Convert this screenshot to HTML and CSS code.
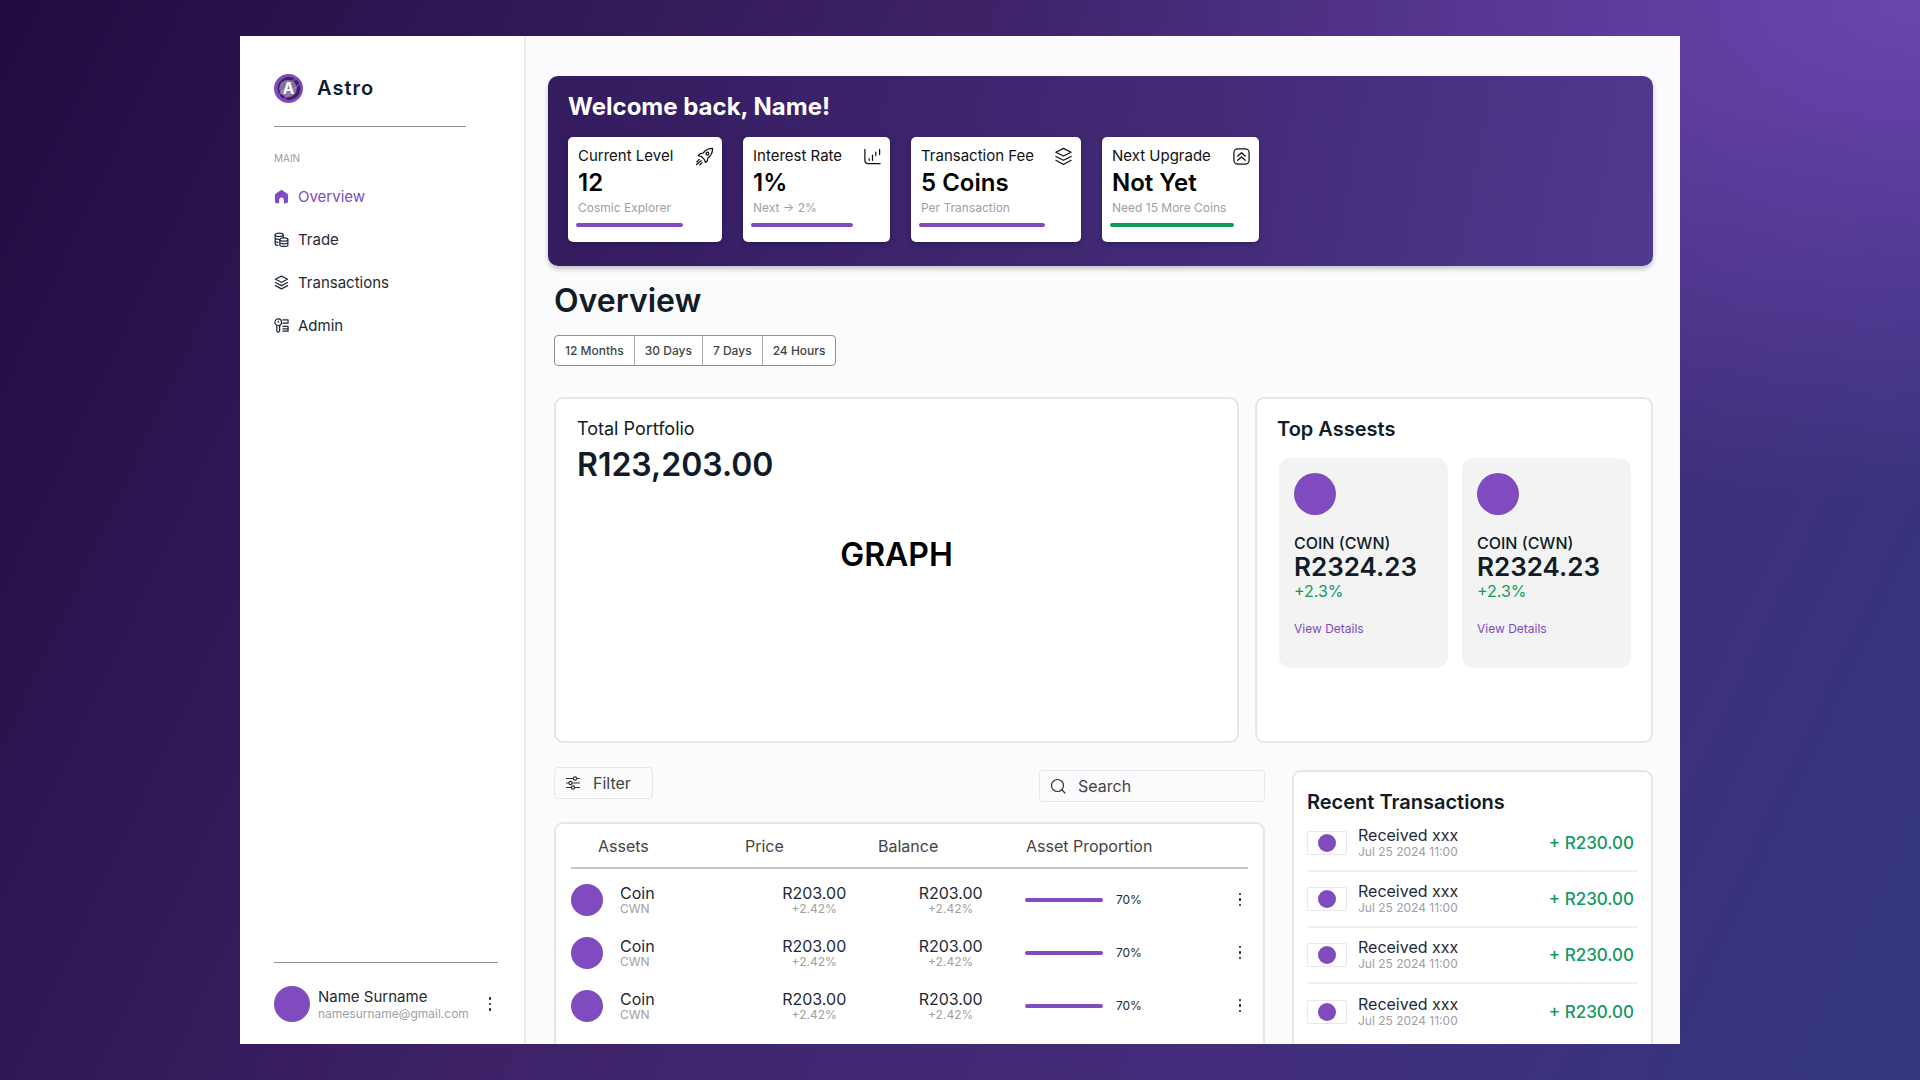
FILE: index.html
```html
<!DOCTYPE html>
<html lang="en">
<head>
<meta charset="utf-8">
<title>Astro</title>
<link rel="stylesheet" href="styles.css">
</head>
<body>
<div class="window">
  <aside class="sidebar">
    <div class="brand">
      <svg class="logo" viewBox="0 0 28 28"><circle cx="14" cy="14" r="14" fill="#7f4bbf"/><circle cx="14.5" cy="14" r="11" fill="#3a2160"/><path d="M5 20 21 4M10 24 26 8" stroke="#7f4bbf" stroke-width="1.5"/><circle cx="13.500" cy="14" r="8.500" fill="#bdb3cc" opacity=".55"/><text x="14" y="19.500" text-anchor="middle" class="logo-letter">A</text></svg>
      <span class="brand-name">Astro</span>
    </div>
    <div class="rule brand-rule"></div>
    <div class="nav-label">MAIN</div>
    <nav class="nav">
      <a class="nav-item active"><svg class="nav-icon" viewBox="0 0 16 16"><path d="M8 .8 2.100 4.700C1.400 5.200 1 5.900 1 6.700V13c0 1.300 1 2.200 2.200 2.200h2.300v-3.600a2.500 2.500 0 0 1 5 0v3.600h2.300c1.200 0 2.200-.9 2.200-2.200V6.700c0-.8-.4-1.500-1.100-2z" fill="#7f4bbf"/></svg>Overview</a>
      <a class="nav-item"><svg class="nav-icon line" viewBox="0 0 16 16"><ellipse cx="5.500" cy="3" rx="4.300" ry="1.800"/><path d="M1.200 3v9.500c0 .9 1.200 1.500 3 1.700M1.200 6.200c0 1 1.500 1.700 4.300 1.700M1.200 9.400c0 .9 1 1.500 3 1.700M9.800 3v3"/><ellipse cx="10.500" cy="8" rx="4.300" ry="1.800"/><path d="M6.200 8v5.800c0 .9 1.900 1.600 4.300 1.600s4.300-.7 4.300-1.600V8M6.200 11c0 .9 1.900 1.600 4.300 1.600s4.300-.7 4.300-1.600"/></svg>Trade</a>
      <a class="nav-item"><svg class="nav-icon line" viewBox="0 0 16 16"><path d="M8 1.200 1.500 4.500 8 7.800l6.500-3.300zM1.500 8 8 11.300 14.500 8M1.500 11.300 8 14.800l6.500-3.500"/></svg>Transactions</a>
      <a class="nav-item"><svg class="nav-icon line" viewBox="0 0 16 16"><circle cx="4.500" cy="4.500" r="3.500"/><path d="M3 8v6l1.500 1.200L6 14V8M4.500 3.500v1M9.500 2H15v3.500H9.500M9.500 5.500H14M9.500 9H15v5H9.500M9.500 11.500H15"/></svg>Admin</a>
    </nav>
    <div class="sidebar-foot">
      <div class="rule"></div>
      <div class="user">
        <span class="dot dot-36"></span>
        <div class="user-text">
          <div class="user-name">Name Surname</div>
          <div class="user-mail">namesurname@gmail.com</div>
        </div>
        <span class="kebab"><i></i><i></i><i></i></span>
      </div>
    </div>
  </aside>

  <main class="main">
    <section class="banner">
      <h2 class="banner-title">Welcome back, Name!</h2>
      <div class="stats">
        <div class="stat s1">
          <div class="stat-head"><span>Current Level</span><svg class="stat-icon" viewBox="0 0 20 20"><path d="M18.500 1.500c-4 0-7.500 1.500-10 5L5.500 7 3.500 9l3.200 1 3.300 3.300 1 3.200 2-2 .5-3c3.500-2.500 5-6 5-10z"/><circle cx="13" cy="7" r="1.500"/><path d="M4.500 13 2 15.500M6.500 14.500 1.500 18.500M7.500 16.500 5 19"/></svg></div>
          <div class="stat-value">12</div>
          <div class="stat-sub">Cosmic Explorer</div>
          <div class="stat-bar w1"></div>
        </div>
        <div class="stat s2">
          <div class="stat-head"><span>Interest Rate</span><svg class="stat-icon" viewBox="0 0 20 20"><path d="M2 2.500v11.500c0 2 1.500 3.500 3.500 3.500H18M6.500 12.500v1.500M10 8.500v5.500M13.500 5.500V9M17.500 2.500v5.500"/></svg></div>
          <div class="stat-value">1%</div>
          <div class="stat-sub">Next → 2%</div>
          <div class="stat-bar w2"></div>
        </div>
        <div class="stat s3">
          <div class="stat-head"><span>Transaction Fee</span><svg class="stat-icon" viewBox="0 0 20 20"><path d="M10 1.500 2 5.500l8 4 8-4zM2 10l8 4 8-4M2 14l8 4.500 8-4.500"/></svg></div>
          <div class="stat-value">5 Coins</div>
          <div class="stat-sub">Per Transaction</div>
          <div class="stat-bar w3"></div>
        </div>
        <div class="stat s4">
          <div class="stat-head"><span>Next Upgrade</span><svg class="stat-icon" viewBox="0 0 20 20"><rect x="2" y="2" width="16" height="16" rx="4"/><path d="M6 9.500l4-3.500 4 3.500M6 14l4-3.500 4 3.500"/></svg></div>
          <div class="stat-value">Not Yet</div>
          <div class="stat-sub">Need 15 More Coins</div>
          <div class="stat-bar w4 green"></div>
        </div>
      </div>
    </section>

    <h1 class="page-title">Overview</h1>
    <div class="segments">
      <span class="segment">12 Months</span><span class="segment">30 Days</span><span class="segment">7 Days</span><span class="segment">24 Hours</span>
    </div>

    <div class="top-row">
      <section class="panel portfolio">
        <div class="portfolio-label">Total Portfolio</div>
        <div class="portfolio-value">R123,203.00</div>
        <div class="graph">GRAPH</div>
      </section>
      <section class="panel top-assets">
        <h3 class="panel-title">Top Assests</h3>
        <div class="asset-cards">
          <div class="asset-card">
            <span class="dot dot-42"></span>
            <div class="asset-name">COIN (CWN)</div>
            <div class="asset-price">R2324.23</div>
            <div class="asset-change">+2.3%</div>
            <a class="asset-link">View Details</a>
          </div>
          <div class="asset-card">
            <span class="dot dot-42"></span>
            <div class="asset-name">COIN (CWN)</div>
            <div class="asset-price">R2324.23</div>
            <div class="asset-change">+2.3%</div>
            <a class="asset-link">View Details</a>
          </div>
        </div>
      </section>
    </div>

    <div class="bottom-row">
      <div class="table-col">
        <div class="toolbar">
          <div class="filter"><svg class="tool-icon" viewBox="0 0 16 16"><path d="M1.500 3.500h13M1.500 8h13M1.500 12.500h13"/><circle cx="10" cy="3.500" r="1.600" fill="#fff"/><circle cx="5.500" cy="8" r="1.600" fill="#fff"/><circle cx="8" cy="12.500" r="1.600" fill="#fff"/></svg>Filter</div>
          <div class="search"><svg class="tool-icon" viewBox="0 0 16 16"><circle cx="7.500" cy="7.500" r="6"/><path d="m12 12 3 3"/></svg>Search</div>
        </div>
        <section class="panel table">
          <div class="t-head">
            <span class="th-assets">Assets</span><span class="th-price">Price</span><span class="th-balance">Balance</span><span class="th-prop">Asset Proportion</span>
          </div>
          <div class="t-row">
            <span class="dot dot-32"></span>
            <div class="t-coin"><div class="t-main">Coin</div><div class="t-sub">CWN</div></div>
            <div class="t-num"><div class="t-main">R203.00</div><div class="t-sub">+2.42%</div></div>
            <div class="t-num"><div class="t-main">R203.00</div><div class="t-sub">+2.42%</div></div>
            <div class="t-prop"><span class="t-bar"></span><span class="t-pct">70%</span></div>
            <span class="kebab"><i></i><i></i><i></i></span>
          </div>
          <div class="t-row">
            <span class="dot dot-32"></span>
            <div class="t-coin"><div class="t-main">Coin</div><div class="t-sub">CWN</div></div>
            <div class="t-num"><div class="t-main">R203.00</div><div class="t-sub">+2.42%</div></div>
            <div class="t-num"><div class="t-main">R203.00</div><div class="t-sub">+2.42%</div></div>
            <div class="t-prop"><span class="t-bar"></span><span class="t-pct">70%</span></div>
            <span class="kebab"><i></i><i></i><i></i></span>
          </div>
          <div class="t-row">
            <span class="dot dot-32"></span>
            <div class="t-coin"><div class="t-main">Coin</div><div class="t-sub">CWN</div></div>
            <div class="t-num"><div class="t-main">R203.00</div><div class="t-sub">+2.42%</div></div>
            <div class="t-num"><div class="t-main">R203.00</div><div class="t-sub">+2.42%</div></div>
            <div class="t-prop"><span class="t-bar"></span><span class="t-pct">70%</span></div>
            <span class="kebab"><i></i><i></i><i></i></span>
          </div>
        </section>
      </div>
      <section class="panel recent">
        <h3 class="panel-title">Recent Transactions</h3>
        <div class="tx"><span class="tx-thumb"><span class="dot dot-18"></span></span><div class="tx-text"><div class="tx-name">Received xxx</div><div class="tx-date">Jul 25 2024 11:00</div></div><div class="tx-amount">+ R230.00</div></div>
        <div class="tx"><span class="tx-thumb"><span class="dot dot-18"></span></span><div class="tx-text"><div class="tx-name">Received xxx</div><div class="tx-date">Jul 25 2024 11:00</div></div><div class="tx-amount">+ R230.00</div></div>
        <div class="tx"><span class="tx-thumb"><span class="dot dot-18"></span></span><div class="tx-text"><div class="tx-name">Received xxx</div><div class="tx-date">Jul 25 2024 11:00</div></div><div class="tx-amount">+ R230.00</div></div>
        <div class="tx"><span class="tx-thumb"><span class="dot dot-18"></span></span><div class="tx-text"><div class="tx-name">Received xxx</div><div class="tx-date">Jul 25 2024 11:00</div></div><div class="tx-amount">+ R230.00</div></div>
      </section>
    </div>
  </main>
</div>
</body>
</html>
```
FILE: styles.css
```css
* { box-sizing: border-box; }
html, body { height: 100%; }
body {
  margin: 0;
  overflow: hidden;
  font-family: Inter, "Liberation Sans", sans-serif;
  color: #101c28;
  padding-top: 36px;
  background:
    radial-gradient(900px 500px at 100% 0%, #6a45ae 0%, rgba(106,69,174,0) 100%),
    linear-gradient(165deg, #1f0b3c 0%, transparent 0%),
    linear-gradient(115deg, #200c40 0%, #3d2268 40%, #432c7a 70%, #33377f 100%);
}
.window { width: 1440px; height: 1008px; margin: 0 auto; display: flex; overflow: hidden; background: #fbfbfe; }

/* sidebar */
.sidebar { width: 285px; flex: none; background: #fff; border-right: 1px solid #e4e4e7; padding: 38px 26px 22px 34px; display: flex; flex-direction: column; box-shadow: 1px 0 2px rgba(0,0,0,.06); }
.brand { display: flex; align-items: center; gap: 14px; height: 28px; }
.logo { width: 29px; height: 29px; flex: none; }
.logo-letter { font: 700 15px Inter, sans-serif; fill: #fff; }
.brand-name { font-size: 20px; font-weight: 600; letter-spacing: 1px; color: #101c28; }
.rule { height: 1px; background: #8f8f94; }
.brand-rule { width: 192px; margin-top: 24px; }
.nav-label { font-size: 10px; line-height: 12px; color: #9b9b9f; margin-top: 25px; }
.nav { display: flex; flex-direction: column; gap: 21px; margin-top: 21px; }
.nav-item { display: flex; align-items: center; gap: 9px; height: 22px; font-size: 15px; color: #1e2a36; }
.nav-item.active { color: #7f4bbf; }
.nav-icon { width: 15px; height: 15px; flex: none; }
.line { fill: none; stroke: #1e2a36; stroke-width: 1.3; stroke-linejoin: round; stroke-linecap: round; }
.sidebar-foot { margin-top: auto; }
.user { display: flex; align-items: center; gap: 8px; margin-top: 23px; position: relative; }
.user-text { flex: 1; min-width: 0; }
.user-name { font-size: 15px; line-height: 18px; color: #1e2a36; }
.user-mail { font-size: 12px; line-height: 15px; color: #a0a0a4; white-space: nowrap; }
.dot { display: block; border-radius: 50%; background: #7f4bbf; flex: none; }
.dot-36 { width: 36px; height: 36px; }
.dot-42 { width: 42px; height: 42px; }
.dot-32 { width: 32px; height: 32px; }
.dot-18 { width: 18px; height: 18px; }
.kebab { display: flex; flex-direction: column; align-items: center; gap: 3px; width: 16px; flex: none; }
.kebab i { width: 2.500px; height: 2.500px; border-radius: 50%; background: #101c28; display: block; }

/* main */
.main { flex: 1; min-width: 0; padding: 40px 27px 0 23px; display: flex; flex-direction: column; }
.banner { margin-left: 0; height: 190px; border-radius: 10px; padding: 16px 20px; background: linear-gradient(100deg, #341b5e 0%, #432b78 60%, #50398f 100%); box-shadow: 0 3px 5px rgba(0,0,0,.22); }
.banner-title { margin: 0; font-size: 24px; line-height: 30px; font-weight: 700; color: #fff; }
.stats { display: flex; gap: 21px; margin-top: 15px; }
.stat { height: 105px; border-radius: 5px; background: #fff; padding: 9px 8px 0 10px; box-shadow: 0 2px 5px rgba(0,0,0,.25); color: #000; }
.s1 { width: 154px; } .s2 { width: 147px; } .s3 { width: 170px; } .s4 { width: 157px; }
.stat-head { display: flex; justify-content: space-between; align-items: center; font-size: 15px; line-height: 20px; color: #111; }
.stat-icon { width: 19px; height: 19px; fill: none; stroke: #111; stroke-width: 1.300; stroke-linecap: round; stroke-linejoin: round; flex: none; }
.stat-value { font-size: 24px; line-height: 30px; font-weight: 600; margin-top: 2px; }
.stat-sub { font-size: 12px; line-height: 16px; color: #a0a0a4; margin-top: 2px; }
.stat-bar { height: 4px; border-radius: 2px; background: #7f4bbf; margin: 7px 0 0 -2px; }
.w1 { width: 107px; } .w2 { width: 102px; } .w3 { width: 126px; } .w4 { width: 124px; }
.stat-bar.green { background: #129a5d; }

.page-title { margin: 16px 0 0 6px; font-size: 32px; line-height: 38px; font-weight: 600; color: #101c28; }
.segments { display: flex; align-self: flex-start; margin: 15px 0 0 6px; border: 1px solid #8f8f94; border-radius: 4px; background: #fff; }
.segment { height: 29px; line-height: 29px; padding: 0 10px; font-size: 12px; font-weight: 500; color: #444; border-left: 1px solid #a8a8ac; }
.segment:first-child { border-left: 0; }

.panel { background: #fff; border: 2px solid #e6e6e8; border-radius: 9px; }
.top-row { display: flex; gap: 16px; margin: 31px 0 0 6px; height: 346px; }
.portfolio { width: 685px; padding: 18px 21px; display: flex; flex-direction: column; }
.portfolio-label { font-size: 18px; line-height: 24px; color: #101c28; }
.portfolio-value { font-size: 32px; line-height: 40px; font-weight: 600; margin-top: 4px; }
.graph { font-size: 32px; font-weight: 600; color: #000; text-align: center; margin-top: 50px; line-height: 40px; }
.top-assets { flex: 1; padding: 18px 20px; }
.panel-title { margin: 0; font-size: 20px; line-height: 24px; font-weight: 600; color: #101c28; }
.asset-cards { display: flex; gap: 14px; margin: 17px 0 0 2px; }
.asset-card { width: 169px; height: 210px; background: #f3f3f3; border-radius: 12px; padding: 15px; display: flex; flex-direction: column; align-items: flex-start; }
.asset-name { font-size: 16px; line-height: 20px; font-weight: 500; margin-top: 18px; }
.asset-price { font-size: 26px; line-height: 30px; font-weight: 600; margin-top: -1px; }
.asset-change { font-size: 16px; line-height: 20px; color: #129a5d; margin-top: -1px; }
.asset-link { font-size: 12px; line-height: 16px; color: #7f4bbf; margin-top: 20px; }

.bottom-row { display: flex; gap: 27px; margin: 24px 0 0 6px; flex: 1; min-height: 0; }
.table-col { width: 711px; flex: none; }
.toolbar { display: flex; justify-content: space-between; align-items: flex-start; }
.filter, .search { display: flex; align-items: center; background: #fbfbfe; border: 1px solid #e6e6e8; border-radius: 4px; font-size: 16px; color: #444; height: 32px; }
.filter { width: 99px; padding-left: 10px; gap: 12px; }
.search { width: 226px; padding-left: 10px; gap: 12px; margin-top: 3px; }
.tool-icon { width: 16px; height: 16px; fill: none; stroke: #333; stroke-width: 1.200; stroke-linecap: round; flex: none; }
.table { margin-top: 20px; height: 320px; padding: 0 15px; }
.t-head { display: flex; height: 45px; align-items: center; font-size: 16px; color: #444; border-bottom: 2px solid #c8c8c8; }
.th-assets { margin-left: 27px; width: 147px; }
.th-price { width: 133px; }
.th-balance { width: 148px; }
.t-row { display: flex; align-items: center; height: 53px; }
.t-row:nth-child(2) { margin-top: 4px; }
.t-coin { width: 132px; margin-left: 17px; }
.t-main { font-size: 16px; line-height: 18px; color: #1e2a36; }
.t-sub { font-size: 12px; line-height: 14px; color: #a0a0a4; }
.t-num { width: 143px; text-align: center; margin-right: 0; }
.t-num + .t-num { margin-right: 6px; }
.t-prop { display: flex; align-items: center; gap: 13px; width: 217px; }
.t-bar { width: 78px; height: 4px; border-radius: 2px; background: #7f4bbf; }
.t-pct { font-size: 12px; color: #1e2a36; }
.recent { flex: 1; margin-top: 3px; margin-right: 0; padding: 18px 13px; height: 320px; }
.recent .panel-title { margin-bottom: 2px; }
.tx { display: flex; align-items: center; height: 56px; border-bottom: 2px solid #f2f2f3; margin-right: 0; }
.tx:last-child { border-bottom: 0; }
.tx-thumb { width: 40px; height: 24px; border: 1px solid #e8e8ea; border-radius: 2px; background: #fff; display: flex; align-items: center; justify-content: center; flex: none; }
.tx-text { flex: 1; margin-left: 11px; }
.tx-name { font-size: 16px; line-height: 18px; color: #1e2a36; }
.tx-date { font-size: 12px; line-height: 16px; color: #a0a0a4; }
.tx-amount { font-size: 17px; font-weight: 500; color: #129a5d; margin-right: 4px; }
```
